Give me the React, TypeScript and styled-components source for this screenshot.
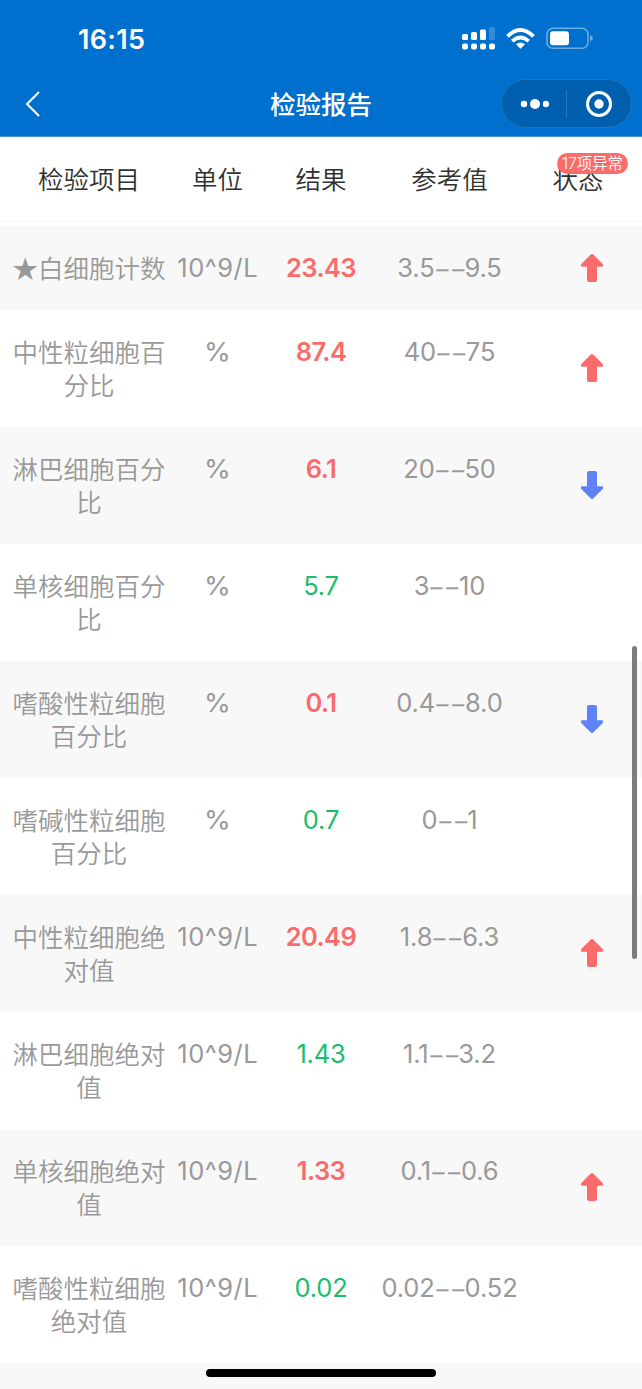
import React from 'react';
import styled, { createGlobalStyle } from 'styled-components';

const GlobalStyle = createGlobalStyle`
  * { box-sizing: border-box; }
  body {
    margin: 0;
    background: #fff;
    font-family: Inter, "Noto Sans CJK SC", sans-serif;
    overflow: hidden;
  }
`;

const Screen = styled.main`
  position: relative;
  width: 642px;
  height: 1389px;
  overflow: hidden;
  background: #fff;
`;

const TopBar = styled.header`
  height: 137px;
  background: #0070ce;
  border-bottom: 1px solid #4395da;
  color: #fff;
`;

const StatusBar = styled.div`
  display: flex;
  align-items: center;
  justify-content: space-between;
  height: 77px;
  padding: 0 48px 0 78px;
`;

const Clock = styled.time`
  margin-top: 1px;
  font-size: 27px;
  font-weight: 600;
  line-height: 33px;
  letter-spacing: 0.3px;
`;

const StatusIcons = styled.svg`
  display: block;
  width: 134px;
  height: 30px;
`;

const NavBar = styled.nav`
  display: grid;
  grid-template-columns: 1fr 102px 1fr;
  align-items: center;
  height: 54px;
  padding: 0 10px 0 10px;
`;

const BackIcon = styled.svg`
  display: block;
  width: 18px;
  height: 28px;
  margin-left: 14px;
`;

const Title = styled.h1`
  margin: 2px 0 0;
  font-size: 25.5px;
  font-weight: 500;
  line-height: 36px;
  white-space: nowrap;
`;

const Capsule = styled.div`
  display: flex;
  align-items: center;
  justify-self: end;
  width: 131px;
  height: 49px;
  margin-top: -1px;
  border: 1px solid #2276bd;
  border-radius: 25px;
  background: #005fae;
`;

const CapsuleButton = styled.span`
  display: flex;
  flex: 1;
  justify-content: center;
`;

const CapsuleDivider = styled.i`
  width: 1px;
  height: 28px;
  background: #2b79bb;
`;

const COLUMNS = '178px 79px 128px 129px 128px';

const TableHead = styled.div`
  display: grid;
  grid-template-columns: ${COLUMNS};
  height: 85px;
  margin-bottom: 4px;
  padding-top: 24px;
  border-bottom: 1px solid #f7f7f7;
  color: #303030;
  font-family: "Noto Sans CJK SC", sans-serif;
  font-size: 25.5px;
  font-weight: 350;
  line-height: 33px;
  text-align: center;
`;

const HeadCell = styled.div`
  position: relative;
`;

const AbnormalBadge = styled.span`
  position: absolute;
  top: -8.5px;
  left: 43px;
  width: 71px;
  height: 21px;
  border-radius: 11px;
  background: #fa6b6b;
  color: #fff;
  font-family: Inter, "Noto Sans CJK SC", sans-serif;
  font-size: 15.4px;
  line-height: 21px;
  white-space: nowrap;
`;

const Row = styled.div<{ $shaded: boolean }>`
  display: grid;
  grid-template-columns: ${COLUMNS};
  padding: 25px 0 26px;
  background: ${({ $shaded }) => ($shaded ? '#f8f8f8' : '#fff')};
  color: #999;
  font-size: 25.5px;
  font-weight: 350;
  line-height: 33px;
  text-align: center;
`;

const Cell = styled.div`
  margin: 0 -8px;
  font-weight: 400;
  white-space: nowrap;
`;

const UnitCell = styled(Cell)<{ $wide: boolean }>`
  letter-spacing: 0.5px;
  margin-right: -8.5px;
  transform: ${({ $wide }) => ($wide ? 'scaleX(1.07)' : 'none')};
`;

const NameCell = styled.div`
  display: flex;
  justify-content: center;
  margin: -1px 0 1px;
  font-family: "Noto Sans CJK SC", sans-serif;
  white-space: pre;
`;

type Level = 'high' | 'low' | 'normal';

const ResultCell = styled(Cell)<{ $level: Level }>`
  color: ${({ $level }) => ($level === 'normal' ? '#19be6b' : '#fa6b6b')};
  font-weight: ${({ $level }) => ($level === 'normal' ? 400 : 600)};
  letter-spacing: ${({ $level }) => ($level === 'normal' ? '-0.2px' : '-0.6px')};
`;

const RangeCell = styled(Cell)`
  letter-spacing: -0.1px;
`;

const Dashes = styled.span`
  display: inline-block;
  margin: 0 4.6px 0 4.1px;
  font-weight: 300;
  letter-spacing: -1px;
  transform: translateY(0.6px) scaleX(1.5);
  -webkit-text-stroke: 0.3px #999;
`;

const StateCell = styled.div`
  display: flex;
  align-items: center;
  justify-content: center;
  padding-left: 28px;
`;

const Arrow = styled.svg<{ $down: boolean }>`
  display: block;
  width: 24px;
  height: 28px;
  fill: ${({ $down }) => ($down ? '#5e83f8' : '#fa6b6b')};
  transform: ${({ $down }) => ($down ? 'rotate(180deg)' : 'none')};
`;

const ScrollThumb = styled.div`
  position: absolute;
  top: 646px;
  right: 5px;
  width: 5px;
  height: 313px;
  border-radius: 3px;
  background: #7c7c7c;
`;

const HomeIndicator = styled.div`
  position: absolute;
  top: 1369px;
  left: 206px;
  width: 230px;
  height: 8px;
  border-radius: 4px;
  background: #000;
`;

const PageTail = styled.div`
  height: 26px;
  background: #f8f8f8;
`;

interface Item {
  name: string;
  unit: string;
  value: string;
  range: [string, string];
  level: Level;
}

const items: Item[] = [
  { name: '★白细胞计数', unit: '10^9/L', value: '23.43', range: ['3.5', '9.5'], level: 'high' },
  { name: '中性粒细胞百\n分比', unit: '%', value: '87.4', range: ['40', '75'], level: 'high' },
  { name: '淋巴细胞百分\n比', unit: '%', value: '6.1', range: ['20', '50'], level: 'low' },
  { name: '单核细胞百分\n比', unit: '%', value: '5.7', range: ['3', '10'], level: 'normal' },
  { name: '嗜酸性粒细胞\n百分比', unit: '%', value: '0.1', range: ['0.4', '8.0'], level: 'low' },
  { name: '嗜碱性粒细胞\n百分比', unit: '%', value: '0.7', range: ['0', '1'], level: 'normal' },
  { name: '中性粒细胞绝\n对值', unit: '10^9/L', value: '20.49', range: ['1.8', '6.3'], level: 'high' },
  { name: '淋巴细胞绝对\n值', unit: '10^9/L', value: '1.43', range: ['1.1', '3.2'], level: 'normal' },
  { name: '单核细胞绝对\n值', unit: '10^9/L', value: '1.33', range: ['0.1', '0.6'], level: 'high' },
  { name: '嗜酸性粒细胞\n绝对值', unit: '10^9/L', value: '0.02', range: ['0.02', '0.52'], level: 'normal' },
];

const signal = [
  { x: 2, y: 10, h: 6 },
  { x: 11, y: 8, h: 8 },
  { x: 20, y: 5.5, h: 10.5 },
];

export default function App() {
  return (
    <Screen>
      <GlobalStyle />
      <TopBar>
        <StatusBar>
          <Clock>16:15</Clock>
          <StatusIcons viewBox="0 0 134 30" fill="#fff">
            {signal.map((b) => (
              <rect key={b.x} x={b.x} y={b.y} width="6" height={b.h} rx="1.5" />
            ))}
            <rect x="29" y="3" width="6" height="13" rx="1.5" opacity=".2" />
            {[2, 11, 20, 29].map((x) => (
              <rect key={x} x={x} y="19.5" width="6" height="6" rx="2" />
            ))}
            <g fill="none" stroke="#fff" strokeWidth="3.8">
              <path d="M47.5 12.300Q60.500-.4 73.500 12.300" />
              <path d="M52.300 17.200Q60.500 9.600 68.700 17.200" />
            </g>
            <path d="M56 20.300Q60.500 16.500 65 20.300L60.500 24.700Z" />
            <rect x="87" y="4.200" width="41" height="20" rx="6" fill="none" stroke="#fff" strokeWidth="1.6" opacity=".42" />
            <rect x="90" y="7.200" width="19" height="14" rx="3" />
            <path d="M130 11.200q3 1 3 3t-3 3Z" opacity=".42" />
          </StatusIcons>
        </StatusBar>
        <NavBar>
          <BackIcon viewBox="0 0 18 28" fill="none" stroke="#fff" strokeWidth="2" strokeLinecap="round" strokeLinejoin="round">
            <path d="M14.500 2.500 3 14l11.500 11.500" />
          </BackIcon>
          <Title>检验报告</Title>
          <Capsule>
            <CapsuleButton>
              <svg width="30" height="12" fill="#fff">
                <circle cx="5" cy="6" r="3.200" />
                <circle cx="16" cy="6" r="5" />
                <circle cx="27" cy="6" r="3.200" />
              </svg>
            </CapsuleButton>
            <CapsuleDivider />
            <CapsuleButton>
              <svg width="28" height="28" fill="none">
                <circle cx="14" cy="14" r="11.500" stroke="#fff" strokeWidth="3" />
                <circle cx="14" cy="14" r="4.700" fill="#fff" />
              </svg>
            </CapsuleButton>
          </Capsule>
        </NavBar>
      </TopBar>
      <TableHead>
        <HeadCell>检验项目</HeadCell>
        <HeadCell>单位</HeadCell>
        <HeadCell>结果</HeadCell>
        <HeadCell>参考值</HeadCell>
        <HeadCell>
          状态
          <AbnormalBadge>17项异常</AbnormalBadge>
        </HeadCell>
      </TableHead>
      {items.map((item, index) => (
        <Row key={item.name} $shaded={index % 2 === 0}>
          <NameCell>{item.name}</NameCell>
          <UnitCell $wide={item.unit === '%'}>{item.unit}</UnitCell>
          <ResultCell $level={item.level}>{item.value}</ResultCell>
          <RangeCell>
            {item.range[0]}
            <Dashes>--</Dashes>
            {item.range[1]}
          </RangeCell>
          <StateCell>
            {item.level !== 'normal' && (
              <Arrow viewBox="0 0 24 28" $down={item.level === 'low'}>
                <path d="M10.800.6Q12-.4 13.200.6L22.700 9.900Q23.900 12.500 22 12.700H17V26Q17 28 15 28H9Q7 28 7 26V12.700H2Q.1 12.500 1.300 9.900Z" />
              </Arrow>
            )}
          </StateCell>
        </Row>
      ))}
      <PageTail />
      <ScrollThumb />
      <HomeIndicator />
    </Screen>
  );
}
